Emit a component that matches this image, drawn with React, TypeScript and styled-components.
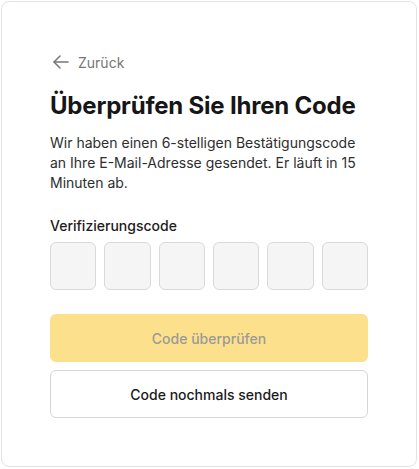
import React from "react";
import styled, { createGlobalStyle } from "styled-components";

const Global = createGlobalStyle`
  html, body { margin: 0; padding: 0; background: #ffffff; }
  body { font-family: Inter, "Noto Sans", sans-serif; -webkit-font-smoothing: antialiased; }
  * { box-sizing: border-box; }
`;

const Page = styled.div`
  padding: 1px 2px 2px 1px;
`;

const Card = styled.div`
  width: 416px;
  height: 466px;
  border: 1px solid #e3e3e3;
  border-radius: 8px;
  padding: 48px;
  display: flex;
  flex-direction: column;
  background: #fff;
`;

const Back = styled.a`
  display: flex;
  align-items: center;
  gap: 5px;
  height: 24px;
  margin-left: -1px;
  color: #767676;
  font-size: 14px;
  text-decoration: none;
  cursor: pointer;
`;

const Title = styled.h1`
  margin: 16px 0 0;
  font-size: 24px;
  line-height: 32px;
  font-weight: 700;
  color: #161616;
  letter-spacing: -0.2px;
`;

const Text = styled.p`
  margin: 11px 0 0;
  font-size: 14px;
  line-height: 20px;
  color: #2e2e2e;
`;

const Label = styled.label`
  margin-top: 23px;
  font-size: 14px;
  line-height: 20px;
  font-weight: 500;
  color: #1c1c1c;
`;

const Boxes = styled.div`
  margin-top: 6px;
  display: flex;
  gap: 8px;
`;

const Box = styled.input`
  flex: 1;
  min-width: 0;
  height: 48px;
  border: 1px solid #d9d9d9;
  border-radius: 6px;
  background: #f5f5f5;
  outline: none;
  text-align: center;
  font-size: 18px;
`;

const Button = styled.button<{ $primary?: boolean }>`
  height: 48px;
  width: 100%;
  border-radius: 6px;
  font-family: inherit;
  font-size: 14px;
  font-weight: 500;
  border: 1px solid ${(p) => (p.$primary ? "#fde08b" : "#d6d6d6")};
  background: ${(p) => (p.$primary ? "#fde08b" : "#ffffff")};
  color: ${(p) => (p.$primary ? "#9a9a9a" : "#1a1a1a")};
  margin-top: ${(p) => (p.$primary ? "24px" : "8px")};
`;

export default function App() {
  return (
    <>
      <Global />
      <Page>
        <Card>
          <Back>
            <svg width="24" height="24" viewBox="0 0 24 24" fill="none" stroke="#767676" strokeWidth="1.5" strokeLinecap="round" strokeLinejoin="round">
              <path d="M19 12H5" />
              <path d="M11 18l-6-6 6-6" />
            </svg>
            Zurück
          </Back>
          <Title>Überprüfen Sie Ihren Code</Title>
          <Text>
            Wir haben einen 6-stelligen Bestätigungscode an Ihre E-Mail-Adresse gesendet. Er läuft in 15 Minuten ab.
          </Text>
          <Label>Verifizierungscode</Label>
          <Boxes>
            {[0, 1, 2, 3, 4, 5].map((i) => (
              <Box key={i} maxLength={1} />
            ))}
          </Boxes>
          <Button $primary disabled>Code überprüfen</Button>
          <Button>Code nochmals senden</Button>
        </Card>
      </Page>
    </>
  );
}
